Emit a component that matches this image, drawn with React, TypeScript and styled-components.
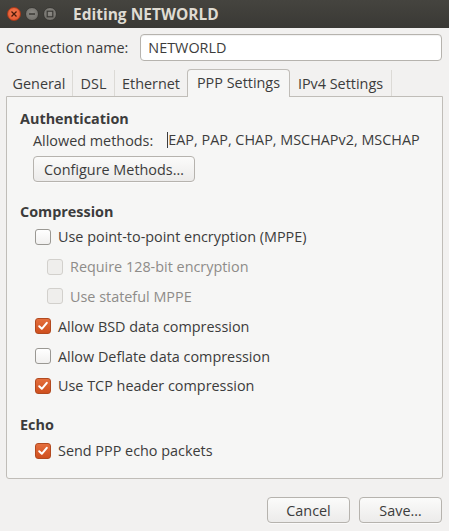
import React from "react";
import styled, { createGlobalStyle } from "styled-components";

const Global = createGlobalStyle`
  html, body { margin: 0; padding: 0; background: #f2f1f0; }
  body { font-family: "Open Sans", "Noto Sans", sans-serif; font-size: 14.4px; color: #3c3c3c; }
  * { box-sizing: border-box; }
`;

const Window = styled.div`
  width: 449px;
  height: 531px;
  background: #f2f1f0;
  display: flex;
  flex-direction: column;
`;

const TitleBar = styled.div`
  height: 28px;
  background: linear-gradient(#45443f, #3a3935);
  display: flex;
  align-items: center;
  padding-left: 7px;
  gap: 4px;
`;

const WinBtn = styled.span<{ $kind: "close" | "min" | "max" }>`
  width: 14px;
  height: 14px;
  border-radius: 50%;
  display: inline-flex;
  align-items: center;
  justify-content: center;
  margin-right: ${(p) => (p.$kind === "max" ? "12px" : "0")};
  background: ${(p) =>
    p.$kind === "close"
      ? "radial-gradient(circle at 50% 40%, #f47a4f, #e0502a)"
      : "radial-gradient(circle at 50% 40%, #8c8a85, #6b6964)"};
  border: 1px solid ${(p) => (p.$kind === "close" ? "#a93a1a" : "#3a3935")};
`;

const Title = styled.span`
  color: #dfdbd2;
  font-weight: 700;
  font-size: 15.5px;
`;

const Body = styled.div`
  flex: 1;
  display: flex;
  flex-direction: column;
  padding: 6px 6px 8px 6px;
`;

const NameRow = styled.div`
  display: flex;
  align-items: center;
  height: 27px;
  gap: 12px;
`;

const Label = styled.span<{ $muted?: boolean }>`
  font-size: 14.4px;
  color: ${(p) => (p.$muted ? "#8e8c89" : "#3c3c3c")};
  white-space: nowrap;
`;

const Entry = styled.div`
  flex: 1;
  height: 27px;
  border: 1px solid #b6b3ae;
  border-radius: 4px;
  background: #ffffff;
  display: flex;
  align-items: center;
  padding-left: 7px;
  margin-right: 1px;
  font-size: 14.4px;
  color: #3c3c3c;
  box-shadow: inset 0 1px 1px rgba(0, 0, 0, 0.06);
`;

const Tabs = styled.div`
  display: flex;
  align-items: flex-end;
  margin-top: 7px;
  height: 28px;
  position: relative;
  z-index: 1;
`;

const Tab = styled.div<{ $active?: boolean; $first?: boolean; $w: number }>`
  width: ${(p) => p.$w}px;
  height: ${(p) => (p.$active ? "28px" : "26px")};
  display: flex;
  align-items: center;
  justify-content: center;
  font-size: 14.4px;
  color: #3c3c3c;
  background: ${(p) => (p.$active ? "#f6f6f5" : "transparent")};
  border: ${(p) => (p.$active ? "1px solid #c0bdb8" : "none")};
  border-bottom: none;
  border-left: ${(p) =>
    p.$active ? "1px solid #c0bdb8" : p.$first ? "none" : "1px solid #dcdad6"};
  border-radius: ${(p) => (p.$active ? "4px 4px 0 0" : "0")};
  margin-bottom: ${(p) => (p.$active ? "-1px" : "0")};
  padding-bottom: ${(p) => (p.$active ? "2px" : "0")};
`;

const TabEnd = styled.div`
  width: 1px;
  height: 26px;
  background: #dcdad6;
`;

const Frame = styled.div`
  height: 383px;
  border: 1px solid #c0bdb8;
  border-radius: 0 0 3px 3px;
  background: #f6f6f5;
  padding: 10px 13px 0 13px;
  display: flex;
  flex-direction: column;
`;

const Heading = styled.div`
  font-weight: 700;
  font-size: 14.4px;
  color: #3c3c3c;
  height: 22px;
  display: flex;
  align-items: center;
`;

const Section = styled.div<{ $gap?: number }>`
  display: flex;
  flex-direction: column;
  margin-top: ${(p) => p.$gap ?? 0}px;
`;

const MethodsRow = styled.div`
  display: flex;
  align-items: center;
  height: 22px;
  padding-left: 13px;
`;

const MethodsValue = styled.span`
  margin-left: 14px;
  border-left: 1px solid #3c3c3c;
  line-height: 16px;
  font-size: 14.4px;
  white-space: nowrap;
`;

const Button = styled.button<{ $w?: number }>`
  height: 26px;
  width: ${(p) => (p.$w ? `${p.$w}px` : "auto")};
  padding: 0 10px;
  font-family: "Open Sans", "Noto Sans", sans-serif;
  font-size: 14.4px;
  color: #3c3c3c;
  border: 1px solid #b6b3ae;
  border-radius: 4px;
  background: linear-gradient(#fbfbfa, #ecebea);
  box-shadow: 0 1px 0 rgba(255, 255, 255, 0.6);
  display: inline-flex;
  align-items: center;
  justify-content: center;
`;

const ConfigureWrap = styled.div`
  padding-left: 13px;
  margin-top: 5px;
`;

const CheckRow = styled.div<{ $indent?: boolean }>`
  display: flex;
  align-items: center;
  height: 29.8px;
  padding-left: ${(p) => (p.$indent ? "27px" : "15px")};
  gap: 7px;
`;

const Box = styled.span<{ $checked?: boolean; $disabled?: boolean }>`
  width: 16px;
  height: 16px;
  border-radius: 3px;
  display: inline-flex;
  align-items: center;
  justify-content: center;
  flex-shrink: 0;
  border: 1px solid
    ${(p) => (p.$checked ? "#b24a20" : p.$disabled ? "#d2d0cc" : "#9a9893")};
  background: ${(p) =>
    p.$checked
      ? "linear-gradient(#e46f3e, #cf4f1e)"
      : p.$disabled
      ? "#efeeec"
      : "linear-gradient(#ffffff, #f1f0ef)"};
`;

const Footer = styled.div`
  display: flex;
  justify-content: flex-end;
  gap: 9px;
  margin-top: auto;
  padding-right: 1px;
`;

function Check({ checked, disabled, indent, label }: { checked?: boolean; disabled?: boolean; indent?: boolean; label: string }) {
  return (
    <CheckRow $indent={indent}>
      <Box $checked={checked} $disabled={disabled}>
        {checked && (
          <svg width="12" height="12" viewBox="0 0 12 12">
            <path d="M2.2 6.2 L4.8 8.8 L9.8 2.8" fill="none" stroke="#ffffff" strokeWidth="2" strokeLinecap="round" strokeLinejoin="round" />
          </svg>
        )}
      </Box>
      <Label $muted={disabled}>{label}</Label>
    </CheckRow>
  );
}

export default function App() {
  return (
    <>
      <Global />
      <Window>
        <TitleBar>
          <WinBtn $kind="close">
            <svg width="8" height="8" viewBox="0 0 8 8">
              <path d="M1.5 1.5 L6.5 6.5 M6.5 1.5 L1.5 6.5" stroke="#4a1a0a" strokeWidth="1.3" />
            </svg>
          </WinBtn>
          <WinBtn $kind="min">
            <svg width="8" height="8" viewBox="0 0 8 8">
              <path d="M1 4 L7 4" stroke="#3a3935" strokeWidth="1.5" />
            </svg>
          </WinBtn>
          <WinBtn $kind="max">
            <svg width="8" height="8" viewBox="0 0 8 8">
              <rect x="1.2" y="1.2" width="5.6" height="5.6" fill="none" stroke="#3a3935" strokeWidth="1.2" />
            </svg>
          </WinBtn>
          <Title>Editing NETWORLD</Title>
        </TitleBar>
        <Body>
          <NameRow>
            <Label>Connection name:</Label>
            <Entry>NETWORLD</Entry>
          </NameRow>
          <Tabs>
            <Tab $first $w={66}>General</Tab>
            <Tab $w={42}>DSL</Tab>
            <Tab $w={73}>Ethernet</Tab>
            <Tab $active $w={103}>PPP Settings</Tab>
            <Tab $first $w={101}>IPv4 Settings</Tab>
            <TabEnd />
          </Tabs>
          <Frame>
            <Section>
              <Heading>Authentication</Heading>
              <MethodsRow>
                <Label>Allowed methods:</Label>
                <MethodsValue>EAP, PAP, CHAP, MSCHAPv2, MSCHAP</MethodsValue>
              </MethodsRow>
              <ConfigureWrap>
                <Button>Configure Methods…</Button>
              </ConfigureWrap>
            </Section>
            <Section $gap={18}>
              <Heading>Compression</Heading>
              <Check label="Use point-to-point encryption (MPPE)" />
              <Check indent disabled label="Require 128-bit encryption" />
              <Check indent disabled label="Use stateful MPPE" />
              <Check checked label="Allow BSD data compression" />
              <Check label="Allow Deflate data compression" />
              <Check checked label="Use TCP header compression" />
            </Section>
            <Section $gap={13}>
              <Heading>Echo</Heading>
              <Check checked label="Send PPP echo packets" />
            </Section>
          </Frame>
          <Footer>
            <Button $w={83}>Cancel</Button>
            <Button $w={83}>Save…</Button>
          </Footer>
        </Body>
      </Window>
    </>
  );
}
